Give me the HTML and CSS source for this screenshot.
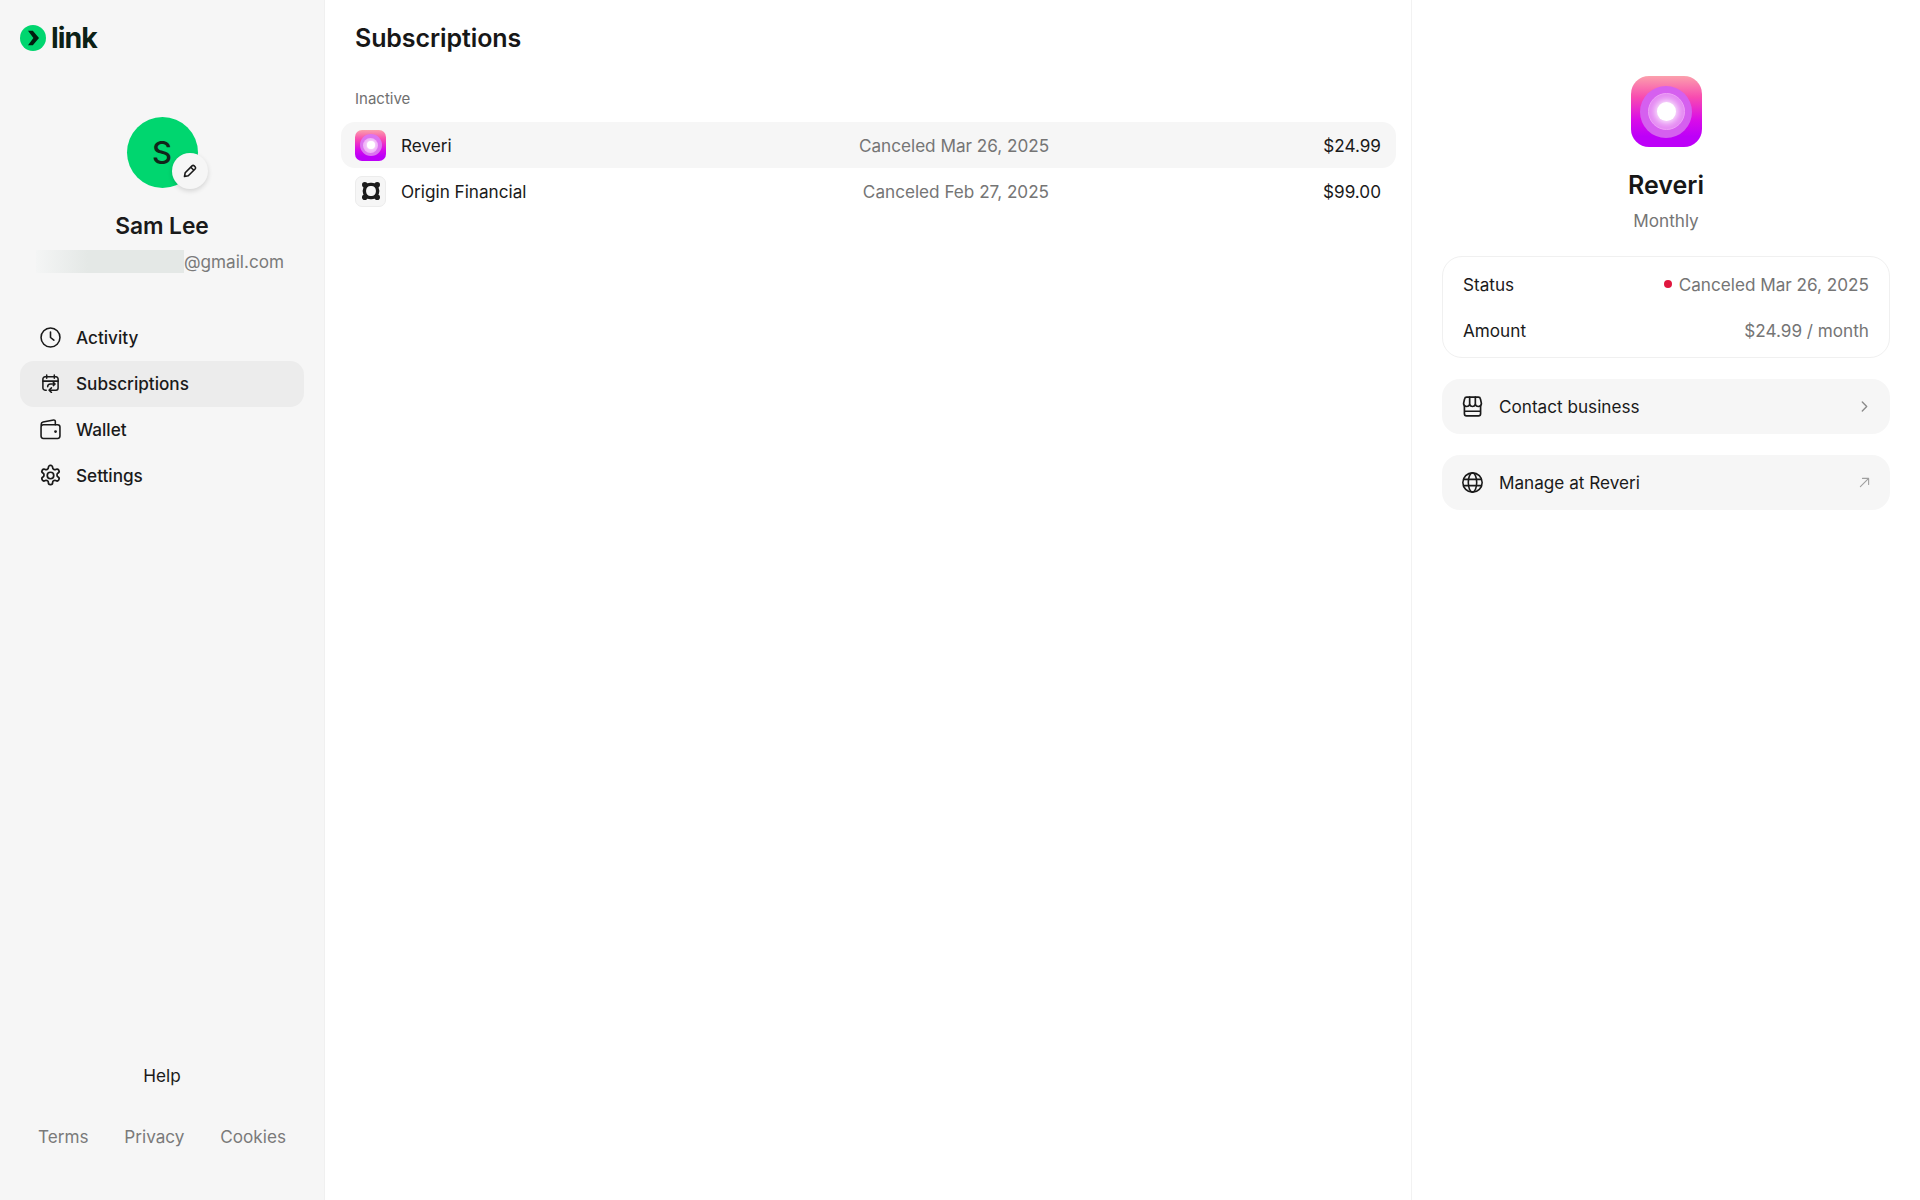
FILE: index.html
```html
<!DOCTYPE html>
<html lang="en">
<head>
<meta charset="utf-8">
<title>Subscriptions</title>
<link rel="stylesheet" href="styles.css">
</head>
<body>
<div class="app">
  <aside class="sidebar">
    <div class="logo">
      <svg class="logo-mark" viewBox="0 0 26 26"><circle cx="13" cy="13" r="13" fill="#00d66f"/><path d="M8 5.800h4.800l6.200 7.200-6.200 7.200H8l5.400-7.200z" fill="#011e0f"/></svg>
      <span class="logo-text">link</span>
    </div>
    <div class="profile">
      <div class="avatar">
        <span>S</span>
        <div class="edit">
          <svg viewBox="0 0 16 16" class="edit-icon" fill="none" stroke="#1a1a1a" stroke-width="1.600" stroke-linejoin="round"><path d="M2.500 13.500l.7-3.800 6.800-6.800a1.600 1.600 0 0 1 2.200 0l.9.900a1.600 1.600 0 0 1 0 2.200l-6.800 6.800z"/><path d="M8.800 4.200l3 3"/></svg>
        </div>
      </div>
      <div class="name">Sam Lee</div>
      <div class="email"><span class="redact"></span><span>@gmail.com</span></div>
    </div>
    <nav class="nav">
      <a class="nav-item">
        <svg class="icon" viewBox="0 0 20 20" fill="none" stroke="#1a1a1a" stroke-width="1.500" stroke-linecap="round" stroke-linejoin="round"><circle cx="10" cy="10" r="9"/><path d="M10 4.800V10l3.200 2.600"/></svg>
        <span>Activity</span>
      </a>
      <a class="nav-item active">
        <svg class="icon icon-small" viewBox="0 0 20 20" fill="none" stroke="#1a1a1a" stroke-width="1.600" stroke-linecap="round" stroke-linejoin="round"><path d="M6 1v3.400M14 1v3.400M2 7.500h16"/><path d="M5.500 17H4.200A2.200 2.200 0 0 1 2 14.800V5.200A2.200 2.200 0 0 1 4.200 3h11.600A2.200 2.200 0 0 1 18 5.200v9.600a2.200 2.200 0 0 1-2.200 2.200H9"/><path d="M11 19.400l-2.400-2.400 2.400-2.400"/><path d="M7 13.500a3 3 0 0 1 3-3h4.500M13 8.800l1.800 1.700L13 12.200"/></svg>
        <span>Subscriptions</span>
      </a>
      <a class="nav-item">
        <svg class="icon" viewBox="0 0 20 20" fill="none" stroke="#1a1a1a" stroke-width="1.500" stroke-linecap="round" stroke-linejoin="round"><path d="M1.200 6V4.800c0-1 .7-1.800 1.700-2L13 1c.9-.1 1.600.5 1.600 1.400V5.500"/><rect x="1" y="5.500" width="18" height="13" rx="2.200"/><circle cx="14.800" cy="12" r=".6" fill="#1a1a1a"/></svg>
        <span>Wallet</span>
      </a>
      <a class="nav-item">
        <svg class="icon icon-large" viewBox="0 0 24 24" fill="none" stroke="#1a1a1a" stroke-width="1.800" stroke-linecap="round" stroke-linejoin="round"><circle cx="12" cy="12" r="3.400"/><path d="M12.200 1.500h-.4a2 2 0 0 0-2 2v.2a2 2 0 0 1-1 1.700l-.4.300a2 2 0 0 1-2 0l-.2-.1a2 2 0 0 0-2.700.7l-.2.400a2 2 0 0 0 .7 2.700l.2.100a2 2 0 0 1 1 1.700v.6a2 2 0 0 1-1 1.700l-.2.100a2 2 0 0 0-.7 2.700l.2.400a2 2 0 0 0 2.700.7l.2-.1a2 2 0 0 1 2 0l.4.300a2 2 0 0 1 1 1.700v.2a2 2 0 0 0 2 2h.4a2 2 0 0 0 2-2v-.2a2 2 0 0 1 1-1.700l.4-.3a2 2 0 0 1 2 0l.2.100a2 2 0 0 0 2.700-.7l.2-.4a2 2 0 0 0-.7-2.700l-.2-.1a2 2 0 0 1-1-1.700v-.6a2 2 0 0 1 1-1.700l.2-.1a2 2 0 0 0 .7-2.700l-.2-.4a2 2 0 0 0-2.700-.7l-.2.100a2 2 0 0 1-2 0l-.4-.3a2 2 0 0 1-1-1.700v-.2a2 2 0 0 0-2-2z"/></svg>
        <span>Settings</span>
      </a>
    </nav>
    <div class="side-foot">
      <div class="help">Help</div>
      <div class="legal"><span>Terms</span><span>Privacy</span><span>Cookies</span></div>
    </div>
  </aside>

  <main class="main">
    <h1 class="title">Subscriptions</h1>
    <div class="section">Inactive</div>
    <div class="list">
      <div class="row selected">
        <div class="app-icon reveri-small"><div class="ring-a"><div class="ring-b"><div class="ring-c"></div></div></div></div>
        <div class="row-name">Reveri</div>
        <div class="row-status">Canceled Mar 26, 2025</div>
        <div class="row-amount">$24.99</div>
      </div>
      <div class="row">
        <div class="app-icon origin">
          <svg viewBox="0 0 20 20" class="origin-mark"><rect x="3.400" y="3.400" width="13.200" height="13.200" rx="6" fill="none" stroke="#1c1c1c" stroke-width="3.400"/><circle cx="3.800" cy="3.800" r="2.800" fill="#1c1c1c"/><circle cx="16.200" cy="3.800" r="2.800" fill="#1c1c1c"/><circle cx="3.800" cy="16.200" r="2.800" fill="#1c1c1c"/><circle cx="16.200" cy="16.200" r="2.800" fill="#1c1c1c"/></svg>
        </div>
        <div class="row-name">Origin Financial</div>
        <div class="row-status">Canceled Feb 27, 2025</div>
        <div class="row-amount">$99.00</div>
      </div>
    </div>
  </main>

  <aside class="detail">
    <div class="hero-icon"><div class="hero-a"><div class="hero-b"><div class="hero-c"></div></div></div></div>
    <div class="detail-name">Reveri</div>
    <div class="detail-sub">Monthly</div>
    <div class="card">
      <div class="card-row"><span class="label">Status</span><span class="value"><i class="dot"></i>Canceled Mar 26, 2025</span></div>
      <div class="card-row"><span class="label">Amount</span><span class="value">$24.99 / month</span></div>
    </div>
    <div class="action">
      <svg class="icon" viewBox="0 0 20 20" fill="none" stroke="#1a1a1a" stroke-width="1.600" stroke-linecap="round" stroke-linejoin="round"><path d="M4.500 1h11A2 2 0 0 1 17.500 2.600L18.500 7a3 3 0 0 1-3 3 3 3 0 0 1-2.800-1.800A3 3 0 0 1 10 10a3 3 0 0 1-2.700-1.800A3 3 0 0 1 4.500 10a3 3 0 0 1-3-3l1-4.400A2 2 0 0 1 4.500 1z"/><path d="M7.300 8V1M12.700 8V1"/><path d="M2.300 9.500V17a2 2 0 0 0 2 2h11.400a2 2 0 0 0 2-2V9.500M2.300 14.500h15.400"/></svg>
      <span class="action-text">Contact business</span>
      <svg class="trail" viewBox="0 0 12 12" fill="none" stroke="#8a8a8a" stroke-width="1.500" stroke-linecap="round" stroke-linejoin="round"><path d="M3.600 1.200L8.400 6l-4.800 4.800"/></svg>
    </div>
    <div class="action">
      <svg class="icon" viewBox="0 0 20 20" fill="none" stroke="#1a1a1a" stroke-width="1.500" stroke-linecap="round" stroke-linejoin="round"><circle cx="10" cy="10" r="9.200"/><ellipse cx="10" cy="10" rx="4" ry="9.200"/><path d="M1.500 7h17M1.500 13h17"/></svg>
      <span class="action-text">Manage at Reveri</span>
      <svg class="trail" viewBox="0 0 12 12" fill="none" stroke="#a0a0a0" stroke-width="1.200" stroke-linecap="round" stroke-linejoin="round"><path d="M1.500 10.500L10.500 1.500M3.800 1.500h6.700v6.700"/></svg>
    </div>
  </aside>
</div>
</body>
</html>
```

FILE: styles.css
```css
* { box-sizing: border-box; }
html, body { margin: 0; height: 100%; }
body {
  font-family: Inter, "Liberation Sans", sans-serif;
  font-size: 17.15px;
  color: #1a1a1a;
  background: #fff;
}
.app { display: flex; height: 1200px; overflow: hidden; }

/* sidebar */
.sidebar {
  width: 325px;
  flex: none;
  background: #f6f6f6;
  border-right: 1px solid #f0f0f0;
  padding: 25px 20px 0 20px;
  display: flex;
  flex-direction: column;
}
.logo { display: flex; align-items: center; height: 26px; gap: 5px; }
.logo-mark { width: 26px; height: 26px; flex: none; }
.logo-text { font-size: 28.5px; font-weight: 700; letter-spacing: -1px; color: #0c2116; line-height: 26px; }
.profile { display: flex; flex-direction: column; align-items: center; margin-top: 66px; }
.avatar {
  width: 71px; height: 71px; border-radius: 50%;
  background: #00d66f;
  position: relative;
  display: flex; align-items: center; justify-content: center;
  font-size: 31px; font-weight: 500; color: #11251a;
}
.edit {
  position: absolute; left: 45px; top: 36px;
  width: 36px; height: 36px; border-radius: 50%;
  background: #f6f6f6;
  box-shadow: 0 2px 5px rgba(0,0,0,.14);
  display: flex; align-items: center; justify-content: center;
}
.edit-icon { width: 16px; height: 16px; }
.name { font-size: 22.8px; font-weight: 600; line-height: 28px; margin-top: 24px; letter-spacing: -.1px; }
.email { display: flex; align-items: center; margin-top: 9px; height: 24px; color: #7a7a7a; margin-left: -4px; }
.redact { display: block; width: 148px; height: 23px; background: linear-gradient(90deg, #f4f5f5 0, #e4e8e6 35%, #e4e8e6 100%); }
.nav { display: flex; flex-direction: column; margin-top: 41.5px; }
.nav-item {
  display: flex; align-items: center; gap: 15px;
  height: 46px; padding-left: 20px;
  border-radius: 14px;
  font-weight: 450;
}
.nav-item.active { background: #ececec; }
.icon { width: 21px; height: 21px; flex: none; }
.icon-small { width: 19px; height: 19px; margin: 0 1px; }
.icon-large { width: 23px; height: 23px; margin: 0 -1px; }
.side-foot { margin-top: auto; padding-bottom: 51px; }
.help { text-align: center; line-height: 24px; }
.legal { display: flex; justify-content: space-between; margin: 37px 18px 0 18px; color: #7a7a7a; line-height: 24px; }

/* main */
.main { flex: 1; padding: 0 15px 0 16px; min-width: 0; }
.title { margin: 0; padding: 24px 14px 0; font-size: 25px; font-weight: 600; line-height: 28px; letter-spacing: -.1px; color: #171717; }
.section { padding: 0 14px; margin-top: 36px; font-size: 15px; line-height: 22px; color: #707070; }
.list { margin-top: 12px; }
.row {
  display: flex; align-items: center;
  height: 46px; padding: 0 15px 0 14px;
  border-radius: 14px;
}
.row.selected { background: #f6f6f6; }
.app-icon { width: 31px; height: 31px; border-radius: 7px; flex: none; display: flex; align-items: center; justify-content: center; }
.reveri-small, .hero-icon { background: linear-gradient(180deg, #fba0ac 0, #f84bb0 30%, #d90ce8 62%, #bd00f8 85%); }
.ring-a { width: 22px; height: 22px; border-radius: 50%; background: #dc74f0; display: flex; align-items: center; justify-content: center; }
.ring-b { width: 15px; height: 15px; border-radius: 50%; background: #f0b4f8; display: flex; align-items: center; justify-content: center; }
.ring-c { width: 8px; height: 8px; border-radius: 50%; background: #fff; box-shadow: 0 0 3px #fff; }
.origin { background: #f6f6f6; border: 1px solid #ececec; }
.origin-mark { width: 20px; height: 20px; }
.row-name { margin-left: 15px; width: 400px; flex: none; }
.row-status { flex: 1; text-align: right; color: #757575; padding-right: 274px; white-space: nowrap; }
.row-amount { flex: none; color: #1a1a1a; }

/* detail */
.detail {
  width: 509px; flex: none;
  border-left: 1px solid #f2f2f2;
  padding: 76px 30px 0 30px;
  display: flex; flex-direction: column; align-items: stretch;
}
.hero-icon { width: 71px; height: 71px; border-radius: 18px; align-self: center; display: flex; align-items: center; justify-content: center; }
.hero-a { width: 52px; height: 52px; border-radius: 50%; background: #d560ef; display: flex; align-items: center; justify-content: center; }
.hero-b { width: 37px; height: 37px; border-radius: 50%; background: #e58af3; border: 1px solid #ee9ff7; display: flex; align-items: center; justify-content: center; }
.hero-c { width: 19px; height: 19px; border-radius: 50%; background: #fff; box-shadow: 0 0 6px 2px rgba(255,255,255,.8); }
.detail-name { text-align: center; font-size: 25px; font-weight: 600; line-height: 30px; margin-top: 23px; color: #171717; }
.detail-sub { text-align: center; color: #757575; line-height: 24px; margin-top: 9px; }
.card { margin-top: 23px; border: 1px solid #f0f0f0; border-radius: 20px; padding: 4px 20px; }
.card-row { display: flex; justify-content: space-between; align-items: center; height: 46px; }
.value { color: #757575; display: flex; align-items: center; }
.dot { width: 8px; height: 8px; border-radius: 50%; background: #e0173f; margin-right: 7px; }
.action {
  display: flex; align-items: center;
  height: 55px; margin-top: 21px;
  padding: 0 20px 0 20px;
  background: #f6f6f6; border-radius: 18px;
}
.action-text { flex: 1; margin-left: 16px; }
.trail { width: 11px; height: 11px; flex: none; }
```
